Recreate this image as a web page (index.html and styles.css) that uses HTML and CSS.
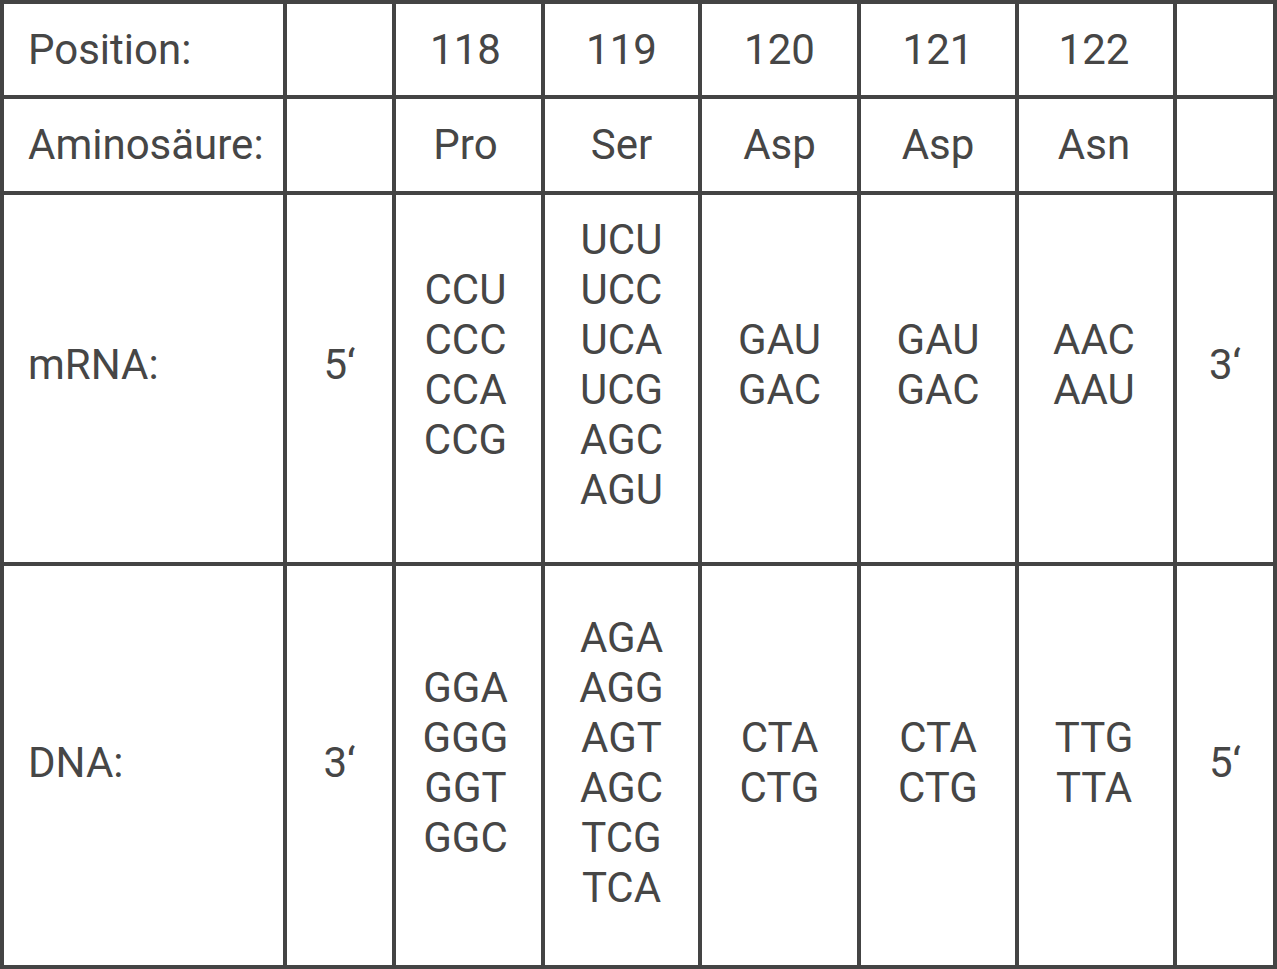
FILE: index.html
```html
<!DOCTYPE html>
<html lang="de">
<head>
<meta charset="utf-8">
<title>Codon-Tabelle</title>
<link rel="stylesheet" href="styles.css">
</head>
<body>
<div class="codon-table">
  <div class="cell label r1">Position:</div>
  <div class="cell r1"></div>
  <div class="cell c3 r1">118</div>
  <div class="cell r1">119</div>
  <div class="cell r1">120</div>
  <div class="cell r1">121</div>
  <div class="cell c7 r1">122</div>
  <div class="cell r1"></div>

  <div class="cell label r2">Aminosäure:</div>
  <div class="cell r2"></div>
  <div class="cell c3 r2">Pro</div>
  <div class="cell r2">Ser</div>
  <div class="cell r2">Asp</div>
  <div class="cell r2">Asp</div>
  <div class="cell c7 r2">Asn</div>
  <div class="cell r2"></div>

  <div class="cell label r3">mRNA:</div>
  <div class="cell r3">5‘</div>
  <div class="cell c3 r3"><span>CCU</span><span>CCC</span><span>CCA</span><span>CCG</span></div>
  <div class="cell r3"><span>UCU</span><span>UCC</span><span>UCA</span><span>UCG</span><span>AGC</span><span>AGU</span></div>
  <div class="cell r3"><span>GAU</span><span>GAC</span></div>
  <div class="cell r3"><span>GAU</span><span>GAC</span></div>
  <div class="cell c7 r3"><span>AAC</span><span>AAU</span></div>
  <div class="cell r3">3‘</div>

  <div class="cell label r4">DNA:</div>
  <div class="cell r4">3‘</div>
  <div class="cell c3 r4"><span>GGA</span><span>GGG</span><span>GGT</span><span>GGC</span></div>
  <div class="cell r4"><span>AGA</span><span>AGG</span><span>AGT</span><span>AGC</span><span>TCG</span><span>TCA</span></div>
  <div class="cell r4"><span>CTA</span><span>CTG</span></div>
  <div class="cell r4"><span>CTA</span><span>CTG</span></div>
  <div class="cell c7 r4"><span>TTG</span><span>TTA</span></div>
  <div class="cell r4">5‘</div>
</div>
</body>
</html>
```

FILE: styles.css
```css
html, body {
  margin: 0;
  padding: 0;
  background: #ffffff;
}

.codon-table {
  display: grid;
  grid-template-columns: 283px 109px 149px 157px 159px 158px 158px 100px;
  grid-template-rows: 95px 96px 371px 403px;
  width: 1277px;
  height: 969px;
  box-sizing: border-box;
  border-top: 4px solid #444444;
  border-left: 4px solid #444444;
  font-family: Roboto, "Liberation Sans", sans-serif;
  font-size: 42px;
  line-height: 50px;
  color: #464646;
}

.cell {
  box-sizing: border-box;
  border-right: 4px solid #444444;
  border-bottom: 4px solid #444444;
  display: flex;
  flex-direction: column;
  justify-content: center;
  align-items: center;
}

.cell span {
  display: block;
}

.cell.label {
  align-items: flex-start;
  padding-left: 24px;
}

.c3 {
  padding-right: 6px;
}

.c7 {
  padding-right: 4px;
}

.r3 {
  padding-bottom: 28px;
}

.r4 {
  padding-bottom: 6px;
}
```
